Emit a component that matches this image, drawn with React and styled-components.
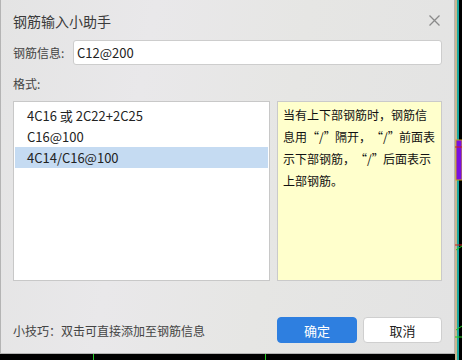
import React, { useState } from "react";
import styled, { createGlobalStyle } from "styled-components";

const Global = createGlobalStyle`
  html, body { margin: 0; padding: 0; background: #000; width: 462px; height: 360px; overflow: hidden; }
  * { box-sizing: border-box; }
  body { font-family: "Noto Sans CJK SC", "Noto Sans", sans-serif; }
`;

const Canvas = styled.svg`
  position: fixed;
  left: 0;
  top: 0;
  width: 462px;
  height: 360px;
`;

const Dialog = styled.div`
  position: relative;
  width: 455px;
  height: 354px;
  background: linear-gradient(100deg, #e4e4e4 0%, #e9e8ea 30%, #e6e6e4 60%, #e3e3e3 100%);
  border: 1px solid #b4b4b4;
  border-top: none;
  display: flex;
  flex-direction: column;
  padding: 0 12px 0 12px;
  color: #333;
`;

const TitleBar = styled.div`
  height: 40px;
  display: flex;
  align-items: center;
  justify-content: space-between;
`;

const Title = styled.div`
  font-size: 14px;
  color: #3a3a3a;
  padding-top: 1px;
`;

const CloseBtn = styled.button`
  border: none;
  background: transparent;
  padding: 0;
  width: 13px;
  height: 13px;
  margin-right: 1px;
  display: flex;
  cursor: pointer;
`;

const FieldRow = styled.div`
  display: flex;
  align-items: center;
  height: 25px;
`;

const Label = styled.div`
  font-size: 12px;
  color: #444;
  width: 60px;
  flex: none;
`;

const Input = styled.input`
  flex: 1;
  height: 25px;
  border: 1px solid #cdcdcd;
  border-radius: 3px;
  background: #fff;
  font-family: "Noto Sans CJK SC", "Noto Sans", sans-serif;
  font-size: 13px;
  color: #222;
  padding: 0 3px;
  outline: none;
`;

const SectionLabel = styled.div`
  font-size: 12px;
  color: #444;
  height: 20px;
  line-height: 20px;
  margin-top: 9px;
`;

const Panels = styled.div`
  margin-top: 7px;
  height: 180px;
  display: flex;
  gap: 7px;
`;

const ListBox = styled.div`
  width: 257px;
  flex: none;
  background: #fff;
  border: 1px solid #c8c8c8;
  padding: 3px 1px;
  display: flex;
  flex-direction: column;
`;

const ListItem = styled.div`
  height: 21px;
  line-height: 21px;
  padding-left: 12px;
  font-size: 13px;
  color: #222;
  background: ${(p) => (p.$selected ? "#c5dbf2" : "transparent")};
  cursor: default;
`;

const InfoBox = styled.div`
  flex: 1;
  background: #ffffcc;
  border: 1px solid #cacaca;
  padding: 2px 4px 0 5px;
  font-size: 12px;
  line-height: 22px;
  color: #111;
  word-break: break-all;
`;

const Quoted = styled.span`
  display: inline-block;
  width: 28px;
  white-space: nowrap;
  text-align: center;
  overflow: visible;
`;

const Footer = styled.div`
  margin-top: 36px;
  height: 26px;
  display: flex;
  align-items: center;
`;

const Tip = styled.div`
  flex: 1;
  font-size: 12px;
  color: #444;
`;

const Button = styled.button`
  width: ${(p) => p.$w}px;
  height: 26px;
  border-radius: 4px;
  font-family: "Noto Sans CJK SC", "Noto Sans", sans-serif;
  font-size: 13px;
  cursor: pointer;
  border: 1px solid ${(p) => (p.$primary ? "#2e7fe0" : "#cfcfcf")};
  background: ${(p) => (p.$primary ? "#2e7fe0" : "#fff")};
  color: ${(p) => (p.$primary ? "#fff" : "#222")};
  margin-left: ${(p) => p.$ml || 0}px;
`;

const items = ["4C16 或 2C22+2C25", "C16@100", "4C14/C16@100"];

export default function App() {
  const [sel, setSel] = useState(2);
  const [val, setVal] = useState("C12@200");
  return (
    <>
      <Global />
      <Canvas viewBox="0 0 462 360">
        <rect x="0" y="0" width="462" height="360" fill="#000" />
        <rect x="455" y="0" width="3" height="360" fill="#c9b68e" />
        <rect x="457" y="0" width="2" height="360" fill="#1aa8a0" />
        <rect x="456" y="140" width="6" height="40" fill="#7a10e0" stroke="#c9a020" strokeWidth="1" />
        <line x1="455" y1="147" x2="462" y2="147" stroke="#d02020" />
        <line x1="455" y1="245" x2="462" y2="245" stroke="#d02020" />
        <line x1="93.5" y1="354" x2="93.5" y2="360" stroke="#22cc22" />
        <line x1="265.5" y1="354" x2="265.5" y2="360" stroke="#22cc22" />
        <line x1="455" y1="337" x2="462" y2="337" stroke="#22cc22" />
        <line x1="456" y1="250" x2="462" y2="246" stroke="#22cc22" />
        <line x1="456" y1="330" x2="462" y2="326" stroke="#22cc22" />
      </Canvas>
      <Dialog>
        <TitleBar>
          <Title>钢筋输入小助手</Title>
          <CloseBtn aria-label="关闭">
            <svg width="13" height="13" viewBox="0 0 13 13">
              <path d="M1.5 1.5 L11.5 11.5 M11.5 1.5 L1.5 11.5" stroke="#8a8a8a" strokeWidth="1.3" fill="none" />
            </svg>
          </CloseBtn>
        </TitleBar>
        <FieldRow>
          <Label>钢筋信息:</Label>
          <Input value={val} onChange={(e) => setVal(e.target.value)} />
        </FieldRow>
        <SectionLabel>格式:</SectionLabel>
        <Panels>
          <ListBox>
            {items.map((t, i) => (
              <ListItem key={t} $selected={i === sel} onClick={() => setSel(i)} onDoubleClick={() => setVal(t)}>
                {t}
              </ListItem>
            ))}
          </ListBox>
          <InfoBox>
            当有上下部钢筋时，钢筋信息用<Quoted>“/”</Quoted>隔开，<Quoted>“/”</Quoted>前面表示下部钢筋，<Quoted>“/”</Quoted>后面表示上部钢筋。
          </InfoBox>
        </Panels>
        <Footer>
          <Tip>小技巧：双击可直接添加至钢筋信息</Tip>
          <Button $primary $w={80}>确定</Button>
          <Button $w={79} $ml={6}>取消</Button>
        </Footer>
      </Dialog>
    </>
  );
}
